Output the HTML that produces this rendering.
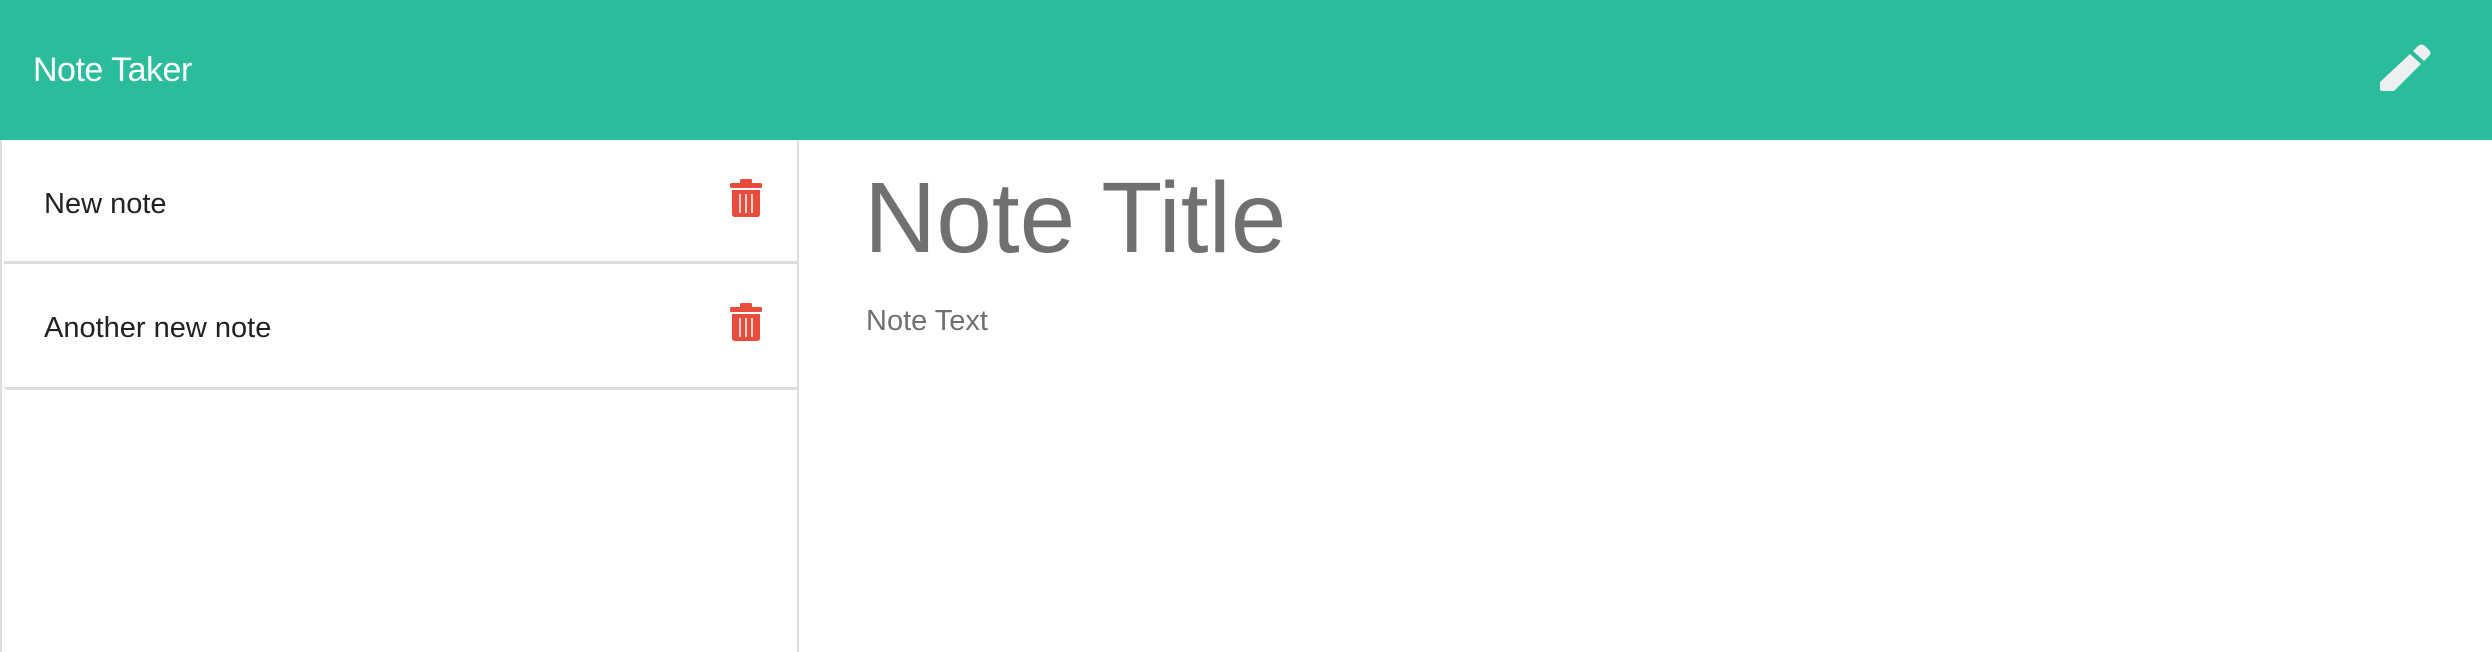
<!DOCTYPE html>
<html><head><style>
body{margin:0;width:2492px;height:652px;overflow:hidden;background:#fff;font-family:"Liberation Sans",sans-serif;position:relative}
.hdr{position:absolute;left:0;top:0;width:2492px;height:140px;background:#2bbc9b}
.hdr .t{position:absolute;left:33px;top:51px;color:#fff;font-size:34px;letter-spacing:-0.5px}
.side{position:absolute;left:0;top:140px;width:799px;height:512px;border-right:2px solid #ddd;box-sizing:border-box;border-left:2px solid #ddd}
.item{position:absolute;left:2px;width:795px;height:124px;border-bottom:3px solid #ddd;box-sizing:border-box}
.item span{position:absolute;left:40px;top:48px;font-size:29px;color:#222}
.item svg{position:absolute;left:726px;top:39px}
.title{position:absolute;left:864px;top:161px;font-size:100px;color:#707070}
.txt{position:absolute;left:866px;top:305px;font-size:29px;color:#707070}
</style></head><body>
<div class="hdr"><div class="t">Note Taker</div>
<svg style="position:absolute;left:2380px;top:43px" width="52" height="50" viewBox="0 0 52 50"><path d="M38 3 Q42 0 45 3 L49 7 Q52 10 49 13 L44 18 L33 8 Z" fill="#ecf0f1"/><path d="M30 11 L41 21 L14 48 L2 48 Q0 48 0 46 L0 39 Z" fill="#ecf0f1"/></svg>
</div>
<div class="side">
<div class="item" style="top:0"><span>New note</span>
<svg width="32" height="38" viewBox="0 0 32 38"><rect x="0" y="4" width="32" height="5" rx="1.5" fill="#e74c3c"/><rect x="10" y="0" width="12" height="5" rx="1.5" fill="#e74c3c"/><path d="M2 11 H30 V35 Q30 38 27 38 H5 Q2 38 2 35 Z" fill="#e74c3c"/><path d="M10 15 V34 M16 15 V34 M22 15 V34" stroke="#fff" stroke-width="1.5"/></svg></div>
<div class="item" style="top:124px;height:126px;border-radius:0 0 4px 4px"><span>Another new note</span>
<svg width="32" height="38" viewBox="0 0 32 38"><rect x="0" y="4" width="32" height="5" rx="1.5" fill="#e74c3c"/><rect x="10" y="0" width="12" height="5" rx="1.5" fill="#e74c3c"/><path d="M2 11 H30 V35 Q30 38 27 38 H5 Q2 38 2 35 Z" fill="#e74c3c"/><path d="M10 15 V34 M16 15 V34 M22 15 V34" stroke="#fff" stroke-width="1.5"/></svg></div>
</div>
<div class="title">Note Title</div>
<div class="txt">Note Text</div>
</body></html>
